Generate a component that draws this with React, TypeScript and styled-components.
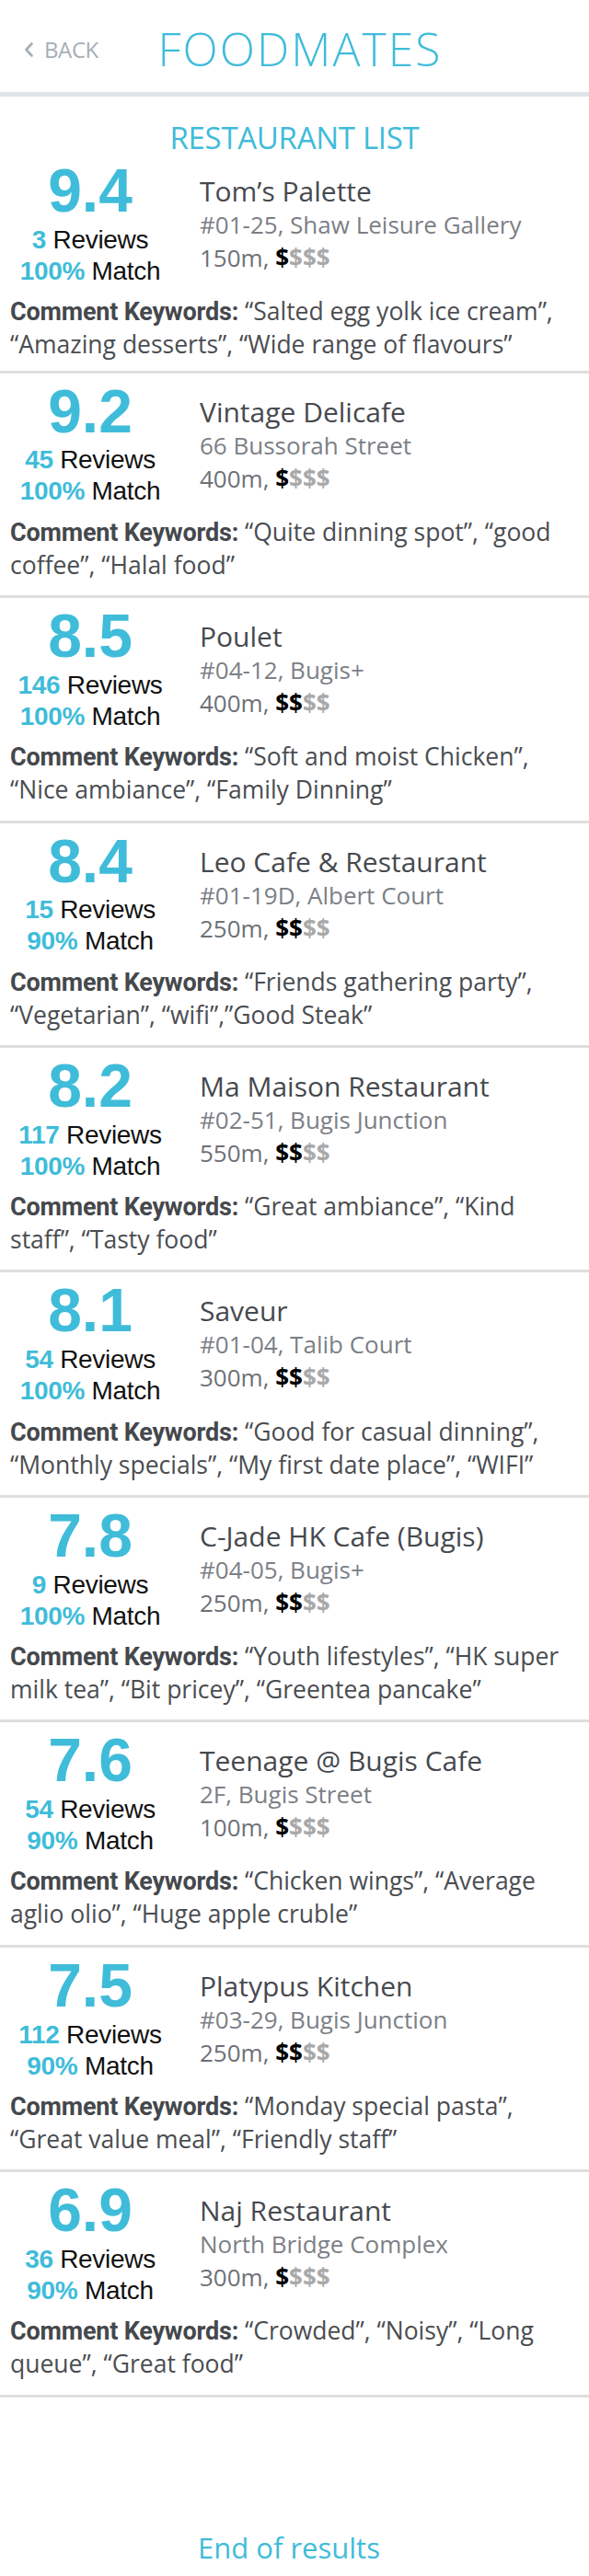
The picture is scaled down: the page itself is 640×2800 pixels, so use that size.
import React from "react";
import styled, { createGlobalStyle } from "styled-components";

const CYAN = "#3fbcd9";

const GlobalStyle = createGlobalStyle`
  html, body { margin: 0; padding: 0; background: #ffffff; }
  body { font-family: "Open Sans", "Noto Sans", sans-serif; }
  * { box-sizing: border-box; }
`;

const Page = styled.div`
  width: 640px;
  min-height: 2800px;
  background: #ffffff;
  display: flex;
  flex-direction: column;
`;

const Header = styled.header`
  position: relative;
  z-index: 1;
  height: 100px;
  padding-top: 25px;
  display: grid;
  grid-template-columns: 1fr auto 1fr;
  align-items: start;
  background: #ffffff;
  box-shadow: 0 5px 0 #dfe4e8;
`;

const BackButton = styled.div`
  display: flex;
  align-items: center;
  gap: 11px;
  margin-top: 14px;
  padding-left: 26px;
  font-family: "Open Sans", sans-serif;
  font-size: 24px;
  line-height: 30px;
  letter-spacing: -0.4px;
  color: #a7aeb5;
`;

const AppTitle = styled.h1`
  margin: 0 0 0 12px;
  font-family: "Open Sans", sans-serif;
  font-weight: 300;
  font-size: 50px;
  line-height: 56px;
  letter-spacing: 2px;
  color: ${CYAN};
`;

const ListTitle = styled.h2`
  margin: 32px 0 0;
  text-align: center;
  font-family: "Open Sans", sans-serif;
  font-weight: 400;
  font-size: 33px;
  line-height: 36px;
  letter-spacing: -0.3px;
  color: ${CYAN};
`;

const Card = styled.section`
  padding: 11px 0 15.4px 11px;
  border-bottom: 3px solid #dedede;
  &:first-child {
    padding-top: 9px;
    padding-bottom: 10.5px;
  }
`;

const TopRow = styled.div`
  display: grid;
  grid-template-columns: 174px 1fr;
  column-gap: 32px;
`;

const ScoreCol = styled.div`
  display: flex;
  flex-direction: column;
  align-items: center;
`;

const Score = styled.div`
  margin-bottom: 5.7px;
  font-family: "Liberation Sans", Arial, sans-serif;
  font-weight: 700;
  font-size: 66px;
  line-height: 60px;
  color: ${CYAN};
`;

const Stat = styled.div<{ $tight?: boolean }>`
  font-family: "Liberation Sans", Arial, sans-serif;
  font-size: 28px;
  line-height: ${(p) => (p.$tight ? "33px" : "35px")};
  letter-spacing: -0.3px;
  color: #111111;
  white-space: nowrap;
  b {
    color: ${CYAN};
    font-weight: 700;
  }
`;

const Info = styled.div`
  padding-top: 13px;
  display: flex;
  flex-direction: column;
  white-space: nowrap;
`;

const Name = styled.div`
  font-size: 30px;
  line-height: 36px;
  color: #46494e;
`;

const Address = styled.div`
  font-size: 26px;
  line-height: 36px;
  color: #7b8086;
`;

const Price = styled.div`
  font-size: 26px;
  line-height: 37px;
  color: #6d7177;
`;

const Dollar = styled.span<{ $on: boolean }>`
  font-weight: 700;
  color: ${(p) => (p.$on ? "#000000" : "#a9a9a9")};
`;

const Comments = styled.div`
  margin-top: 10.4px;
  font-size: 26.5px;
  line-height: 35px;
  color: #4a4d51;
`;

const CommentLine = styled.div`
  white-space: nowrap;
`;

const Label = styled.span`
  font-family: "Roboto", sans-serif;
  font-weight: 700;
  font-size: 27px;
  letter-spacing: -0.2px;
  color: #45484c;
`;

const Footer = styled.div`
  margin-top: 143px;
  padding-right: 12px;
  text-align: center;
  font-size: 31px;
  line-height: 40px;
  color: ${CYAN};
`;

type Restaurant = {
  score: string;
  reviews: number;
  match: string;
  name: string;
  address: string;
  distance: string;
  price: number;
  line1: string;
  line2: string;
};

const restaurants: Restaurant[] = [
  {
    score: "9.4",
    reviews: 3,
    match: "100%",
    name: "Tom’s Palette",
    address: "#01-25, Shaw Leisure Gallery",
    distance: "150m",
    price: 1,
    line1: "“Salted egg yolk ice cream”,",
    line2: "“Amazing desserts”, “Wide range of flavours”",
  },
  {
    score: "9.2",
    reviews: 45,
    match: "100%",
    name: "Vintage Delicafe",
    address: "66 Bussorah Street",
    distance: "400m",
    price: 1,
    line1: "“Quite dinning spot”, “good",
    line2: "coffee”, “Halal food”",
  },
  {
    score: "8.5",
    reviews: 146,
    match: "100%",
    name: "Poulet",
    address: "#04-12, Bugis+",
    distance: "400m",
    price: 2,
    line1: "“Soft and moist Chicken”,",
    line2: "“Nice ambiance”, “Family Dinning”",
  },
  {
    score: "8.4",
    reviews: 15,
    match: "90%",
    name: "Leo Cafe & Restaurant",
    address: "#01-19D, Albert Court",
    distance: "250m",
    price: 2,
    line1: "“Friends gathering party”,",
    line2: "“Vegetarian”, “wifi”,”Good Steak”",
  },
  {
    score: "8.2",
    reviews: 117,
    match: "100%",
    name: "Ma Maison Restaurant",
    address: "#02-51, Bugis Junction",
    distance: "550m",
    price: 2,
    line1: "“Great ambiance”, “Kind",
    line2: "staff”, “Tasty food”",
  },
  {
    score: "8.1",
    reviews: 54,
    match: "100%",
    name: "Saveur",
    address: "#01-04, Talib Court",
    distance: "300m",
    price: 2,
    line1: "“Good for casual dinning”,",
    line2: "“Monthly specials”, “My first date place”, “WIFI”",
  },
  {
    score: "7.8",
    reviews: 9,
    match: "100%",
    name: "C-Jade HK Cafe (Bugis)",
    address: "#04-05, Bugis+",
    distance: "250m",
    price: 2,
    line1: "“Youth lifestyles”, “HK super",
    line2: "milk tea”, “Bit pricey”, “Greentea pancake”",
  },
  {
    score: "7.6",
    reviews: 54,
    match: "90%",
    name: "Teenage @ Bugis Cafe",
    address: "2F, Bugis Street",
    distance: "100m",
    price: 1,
    line1: "“Chicken wings”, “Average",
    line2: "aglio olio”, “Huge apple cruble”",
  },
  {
    score: "7.5",
    reviews: 112,
    match: "90%",
    name: "Platypus Kitchen",
    address: "#03-29, Bugis Junction",
    distance: "250m",
    price: 2,
    line1: "“Monday special pasta”,",
    line2: "“Great value meal”, “Friendly staff”",
  },
  {
    score: "6.9",
    reviews: 36,
    match: "90%",
    name: "Naj Restaurant",
    address: "North Bridge Complex",
    distance: "300m",
    price: 1,
    line1: "“Crowded”, “Noisy”, “Long",
    line2: "queue”, “Great food”",
  },
];

const Chevron = () => (
  <svg width="11" height="16" viewBox="0 0 11 16" aria-hidden="true">
    <polyline
      points="8.5,1.5 2.5,8 8.5,14.5"
      fill="none"
      stroke="#a7aeb5"
      strokeWidth="2.6"
      strokeLinecap="round"
      strokeLinejoin="round"
    />
  </svg>
);

const RestaurantCard = ({ r }: { r: Restaurant }) => (
  <Card>
    <TopRow>
      <ScoreCol>
        <Score>{r.score}</Score>
        <Stat>
          <b>{r.reviews}</b> Reviews
        </Stat>
        <Stat $tight>
          <b>{r.match}</b> Match
        </Stat>
      </ScoreCol>
      <Info>
        <Name>{r.name}</Name>
        <Address>{r.address}</Address>
        <Price>
          {r.distance},{" "}
          {[0, 1, 2, 3].map((i) => (
            <Dollar key={i} $on={i < r.price}>
              $
            </Dollar>
          ))}
        </Price>
      </Info>
    </TopRow>
    <Comments>
      <CommentLine>
        <Label>Comment Keywords:</Label> {r.line1}
      </CommentLine>
      <CommentLine>{r.line2}</CommentLine>
    </Comments>
  </Card>
);

export default function App() {
  return (
    <>
      <GlobalStyle />
      <Page>
        <Header>
          <BackButton>
            <Chevron />
            BACK
          </BackButton>
          <AppTitle>FOODMATES</AppTitle>
          <div />
        </Header>
        <ListTitle>RESTAURANT LIST</ListTitle>
        <div>
          {restaurants.map((r) => (
            <RestaurantCard key={r.name} r={r} />
          ))}
        </div>
        <Footer>End of results</Footer>
      </Page>
    </>
  );
}
